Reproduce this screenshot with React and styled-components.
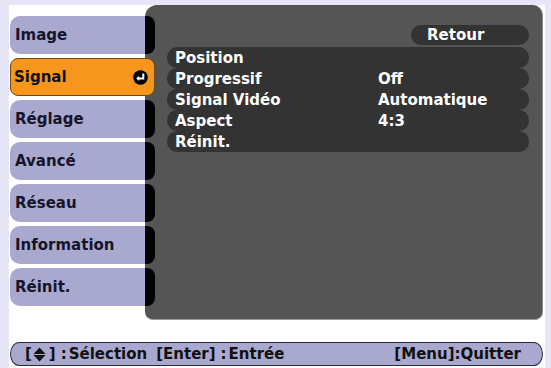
import React from "react";
import styled, { createGlobalStyle } from "styled-components";

const GlobalStyle = createGlobalStyle`
  html, body {
    margin: 0;
    padding: 0;
    background: #e6e6f6;
  }
  body {
    font-family: "DejaVu Sans", "Liberation Sans", sans-serif;
    font-weight: bold;
    overflow: hidden;
  }
`;

const menuItems = ["Image", "Signal", "Réglage", "Avancé", "Réseau", "Information", "Réinit."];

const rows = [
  { label: "Position", value: "" },
  { label: "Progressif", value: "Off" },
  { label: "Signal Vidéo", value: "Automatique" },
  { label: "Aspect", value: "4:3" },
  { label: "Réinit.", value: "" },
];

function EnterIcon() {
  return (
    <svg width="15" height="15" viewBox="0 0 15 15">
      <circle cx="7.5" cy="7.5" r="7.3" fill="#000" />
      <path d="M10.3 3.6 V8.4 H5.4" stroke="#fff" strokeWidth="2" fill="none" />
      <path d="M3.2 8.4 L6.2 5.8 V11 Z" fill="#fff" />
    </svg>
  );
}

function UpDownIcon() {
  return (
    <svg width="13" height="15" viewBox="0 0 13 15">
      <path d="M6.5 0.5 L12.5 7 H0.5 Z" fill="#111" />
      <path d="M6.5 14.5 L12.5 8 H0.5 Z" fill="#111" />
    </svg>
  );
}

export default function App() {
  const selected = "Signal";
  return (
    <>
      <GlobalStyle />
      <Screen>
        <Main>
          <Menu>
            {menuItems.map((item) =>
              item === selected ? (
                <ItemActive key={item}>
                  <span>{item}</span>
                  <EnterIcon />
                </ItemActive>
              ) : (
                <Item key={item}>
                  <ItemLabel>{item}</ItemLabel>
                  <ItemCap />
                </Item>
              )
            )}
          </Menu>
          <Panel>
            <BackRow>
              <BackPill>Retour</BackPill>
            </BackRow>
            <RowList>
              {rows.map((r) => (
                <Row key={r.label}>
                  <RowLabel>{r.label}</RowLabel>
                  <RowValue>{r.value}</RowValue>
                </Row>
              ))}
            </RowList>
          </Panel>
        </Main>
        <Footer>
          <FooterGroup>
            <Hint>
              [<IconBox><UpDownIcon /></IconBox>]<Sep spaced>:</Sep>Sélection
            </Hint>
            <Hint>
              [Enter]<Sep spaced>:</Sep>Entrée
            </Hint>
          </FooterGroup>
          <Hint>
            [Menu]<Sep>:</Sep>Quitter
          </Hint>
        </Footer>
      </Screen>
    </>
  );
}

const Screen = styled.div`
  margin: 5px 6px 0 9px;
  height: 363px;
  background: #ffffff;
  display: flex;
  flex-direction: column;
`;

const Main = styled.div`
  display: flex;
  height: 315px;
`;

const Menu = styled.nav`
  width: 145px;
  margin-left: 1px;
  margin-right: -10px;
  padding-top: 11px;
  display: flex;
  flex-direction: column;
  gap: 4px;
  position: relative;
  z-index: 1;
`;

const Item = styled.div`
  display: flex;
  height: 38px;
`;

const ItemLabel = styled.div`
  flex: 1;
  display: flex;
  align-items: center;
  padding-left: 5px;
  background: #a9a9cf;
  border-radius: 10px 0 0 10px;
  color: #15152a;
  font-size: 15px;
`;

const ItemCap = styled.div`
  width: 10px;
  background: #000;
  border-radius: 0 8px 8px 0;
`;

const ItemActive = styled.div`
  height: 38px;
  box-sizing: border-box;
  display: flex;
  align-items: center;
  justify-content: space-between;
  padding: 0 6px 0 3px;
  background: #f7961c;
  border: 1px solid #6e4a10;
  border-radius: 8px;
  color: #111;
  font-size: 15px;
`;

const Panel = styled.section`
  flex: 1;
  margin-right: 2px;
  padding: 20px 13px 0 22px;
  background: #555555;
  border-radius: 12px 10px 8px 8px;
  border-right: 1px solid #8a8a8a;
  border-bottom: 1px solid #9a9a9a;
  display: flex;
  flex-direction: column;
`;

const BackRow = styled.div`
  display: flex;
  justify-content: flex-end;
  margin-bottom: 2px;
`;

const BackPill = styled.div`
  width: 118px;
  height: 20px;
  box-sizing: border-box;
  padding-left: 16px;
  display: flex;
  align-items: center;
  background: #333333;
  border-radius: 10px;
  color: #ffffff;
  font-size: 15px;
`;

const RowList = styled.div`
  display: flex;
  flex-direction: column;
`;

const Row = styled.div`
  height: 21px;
  display: grid;
  grid-template-columns: 203px 1fr;
  align-items: center;
  padding-left: 8px;
  background: #333333;
  border-radius: 10px;
  color: #ffffff;
  font-size: 15px;
`;

const RowLabel = styled.span``;

const RowValue = styled.span``;

const Footer = styled.footer`
  margin: 22px 2px 0 1px;
  height: 24px;
  box-sizing: border-box;
  display: flex;
  align-items: center;
  justify-content: space-between;
  padding: 0 21px 0 14px;
  background: #a9a9cf;
  border: 1px solid #2a2a3a;
  border-radius: 9px / 12px;
  color: #111;
  font-size: 15px;
`;

const FooterGroup = styled.div`
  display: flex;
  gap: 9px;
`;

const Hint = styled.span`
  display: inline-flex;
  align-items: center;
  white-space: nowrap;
`;

const IconBox = styled.span`
  display: inline-flex;
  margin: 0 3px 0 1px;
`;

const Sep = styled.span`
  margin: ${(p) => (p.spaced ? "0 2px 0 5px" : "0")};
`;
